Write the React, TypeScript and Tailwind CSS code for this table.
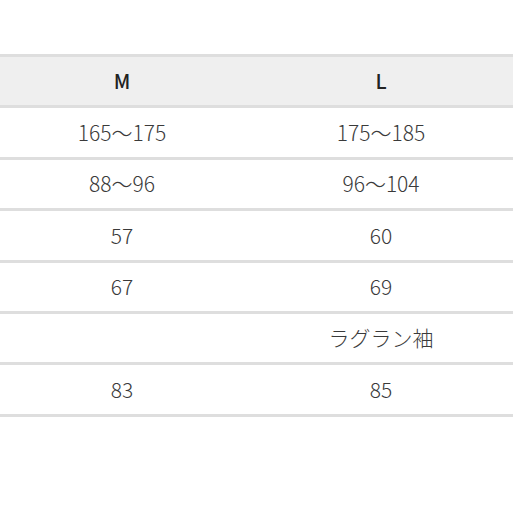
const rows: [string, string][] = [
  ["165〜175", "175〜185"],
  ["88〜96", "96〜104"],
  ["57", "60"],
  ["67", "69"],
  ["", "ラグラン袖"],
  ["83", "85"],
];

export default function App() {
  return (
    <div
      className="w-[513px] h-[513px] bg-white overflow-hidden pt-[54px]"
      style={{ fontFamily: '"Noto Sans CJK JP", "Noto Sans", sans-serif' }}
    >
      <div className="border-t-[3px] border-[#dedede]">
        {/* Header */}
        <div className="grid grid-cols-[244px_274px] h-[51.4px] items-center bg-[#efefef] border-b-[3px] border-[#dedede] text-[20px] font-medium text-[#222]">
          <div className="text-center">M</div>
          <div className="text-center">L</div>
        </div>

        {rows.map(([m, l], i) => (
          <div
            key={i}
            className="grid grid-cols-[244px_274px] h-[51.4px] items-center border-b-[3px] border-[#dedede] text-[21px] font-light text-[#3a3a3a]"
          >
            <div className="text-center">{m}</div>
            <div className="text-center">{l}</div>
          </div>
        ))}
      </div>
    </div>
  );
}
